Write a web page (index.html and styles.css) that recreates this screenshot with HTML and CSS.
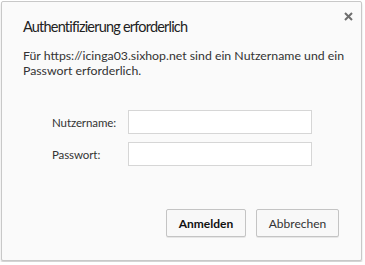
FILE: index.html
```html
<!DOCTYPE html>
<html lang="de">
<head>
  <meta charset="UTF-8">
  <title>Authentifizierung erforderlich</title>
  <link rel="stylesheet" href="styles.css">
</head>
<body>

<div class="dialog">
  <button class="schliessen" title="Schließen">
    <svg width="9" height="9" viewBox="0 0 9 9">
      <path d="M1 1 L8 8 M8 1 L1 8" stroke="#6e6e6e" stroke-width="2"/>
    </svg>
  </button>
  <h1 class="titel">Authentifizierung erforderlich</h1>
  <p class="hinweis">Für https://icinga03.sixhop.net sind ein Nutzername und ein Passwort erforderlich.</p>

  <div class="formular">
    <label class="feld">
      <span class="beschriftung">Nutzername:</span>
      <input type="text" class="eingabe">
    </label>
    <label class="feld">
      <span class="beschriftung">Passwort:</span>
      <input type="password" class="eingabe">
    </label>
  </div>

  <div class="aktionen">
    <button class="knopf primaer">Anmelden</button>
    <button class="knopf">Abbrechen</button>
  </div>
</div>

</body>
</html>
```

FILE: styles.css
```css
body {
  margin: 0;
  padding: 1px;
  background-color: #fff;
  font-family: Lato, "Noto Sans", sans-serif;
  color: #222;
}
.dialog {
  position: relative;
  width: 361px;
  height: 260px;
  box-sizing: border-box;
  background-color: #fafafa;
  border: 1px solid #c8c8c8;
  border-radius: 2px;
  box-shadow: 0 2px 2px rgba(0, 0, 0, 0.18);
  padding: 14px 22px 0 21px;
}
.schliessen {
  position: absolute;
  top: 10px;
  right: 8px;
  border: none;
  background: none;
  padding: 0;
  width: 9px;
  height: 9px;
  cursor: pointer;
}
.schliessen svg { display: block; }
.titel {
  margin: 0;
  font-size: 14.5px;
  font-weight: normal;
  letter-spacing: -0.8px;
  color: #222;
  line-height: 22px;
}
.hinweis {
  margin: 10px 0 0 0;
  width: 330px;
  font-size: 12.3px;
  line-height: 15px;
  color: #333;
}
.formular {
  margin-top: 32px;
  display: flex;
  flex-direction: column;
  gap: 8px;
}
.feld {
  display: flex;
  align-items: center;
}
.beschriftung {
  width: 76px;
  padding-left: 29px;
  font-size: 11.5px;
  letter-spacing: -0.1px;
  color: #333;
}
.eingabe {
  width: 184px;
  height: 24px;
  box-sizing: border-box;
  border: 1px solid #d6d6d6;
  background-color: #fff;
  margin: 0;
  padding: 2px 4px;
  font-size: 12px;
}
.aktionen {
  margin-top: 43px;
  display: flex;
  justify-content: flex-end;
  gap: 10px;
}
.knopf {
  height: 28px;
  padding: 0;
  border: 1px solid #c4c4c4;
  border-radius: 2px;
  background-color: #f8f8f8;
  box-shadow: 0 1px 0 rgba(0, 0, 0, 0.08);
  font-family: Lato, "Noto Sans", sans-serif;
  font-size: 12px;
  color: #333;
  width: 83px;
  cursor: pointer;
}
.primaer {
  width: 80px;
  font-weight: bold;
  color: #111;
}
```
